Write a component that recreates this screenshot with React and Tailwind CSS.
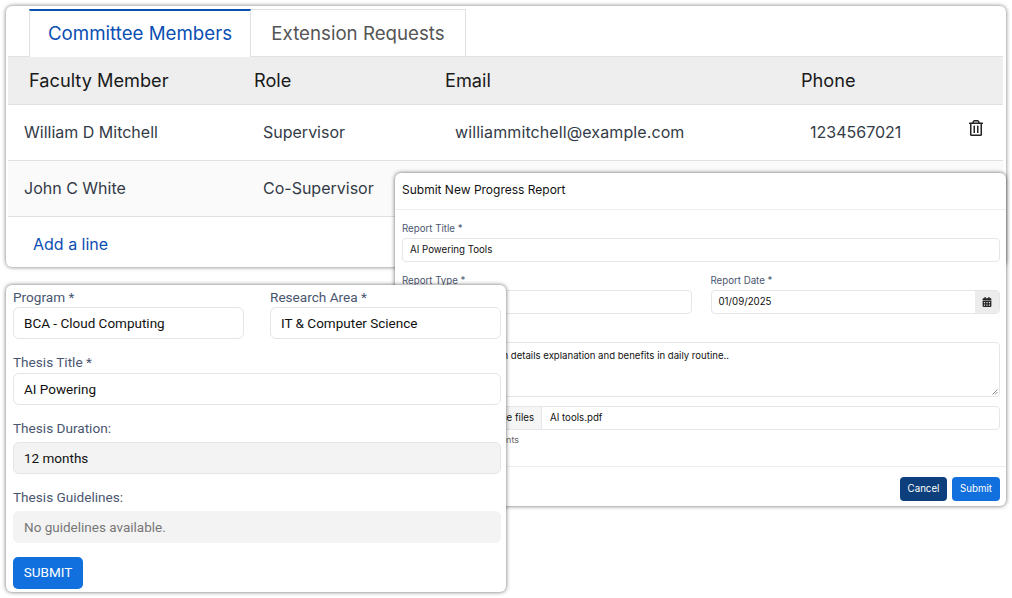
import { FaRegTrashAlt, FaCalendarAlt } from 'react-icons/fa';

const rows = [
  { name: 'William D Mitchell', role: 'Supervisor', email: 'williammitchell@example.com', phone: '1234567021', remove: true },
  { name: 'John C White', role: 'Co-Supervisor', email: 'johnwhite@example.com', phone: '1234567022', remove: false },
];

function CommitteeCard() {
  return (
    <div className="absolute left-[6px] top-[6px] w-[1000px] h-[261px] bg-white rounded-[6px] shadow-[0_0_4px_rgba(0,0,0,0.55)] overflow-hidden font-['Inter',sans-serif]">
      <div className="flex pl-[23px] pt-[3px] h-[51px] border-b border-[#dee2e6] ml-[2px] mr-[3px]">
        <div className="w-[222px] h-[48px] -ml-[2px] bg-white border-x border-[#dee2e6] border-t-2 border-t-[#0b4fb3] text-[#0b4fb3] text-[18.7px] flex items-center justify-center">Committee Members</div>
        <div className="w-[215px] h-[47px] pt-[2px] border-r border-t border-[#dee2e6] text-[#555] text-[18.7px] flex items-center justify-center">Extension Requests</div>
      </div>
      <div className="mx-[2px] mr-[3px] grid grid-cols-[239px_192px_355px_1fr] h-[48px] items-center bg-[#eeeeee] border-b border-[#dee2e6] text-[18.2px] text-[#1a1a1a]">
        <div className="pl-[21px]">Faculty Member</div>
        <div className="pl-[7px]">Role</div>
        <div className="pl-[6px]">Email</div>
        <div className="pl-[7px]">Phone</div>
      </div>
      {rows.map((r, i) => (
        <div key={r.name} className={`mx-[2px] mr-[3px] grid grid-cols-[239px_192px_355px_1fr] h-[56px] items-center border-b border-[#dee2e6] pb-[1px] text-[16px] text-[#333b47] ${i % 2 ? 'bg-[#fafafa]' : 'bg-white'}`}>
          <div className="pl-[16px]">{r.name}</div>
          <div className="pl-[16px]">{r.role}</div>
          <div className="pl-[16px] tracking-[0.1px]">{r.email}</div>
          <div className="pl-[16px] flex items-center justify-between pr-[19px]">
            <span>{r.phone}</span>
            {r.remove && <FaRegTrashAlt className="text-[16px] text-[#222] -mt-[9px]" />}
          </div>
        </div>
      ))}
      <div className="pl-[27px] pt-[15px] text-[16px] text-[#0b4fb3]">Add a line</div>
    </div>
  );
}

function ModalField({ label, children, className = '' }) {
  return (
    <div className={className}>
      <div className="text-[9.7px] leading-[14px] text-[#4a5670] mb-[2px]">{label}</div>
      {children}
    </div>
  );
}

const modalInput = 'h-[24px] bg-white border border-[#e3e6ea] rounded-[4px] flex items-center pl-[7px] text-[9.7px] text-[#111]';

function ProgressModal() {
  return (
    <div className="absolute left-[395px] top-[173px] w-[611px] h-[333px] bg-white rounded-[6px] shadow-[0_0_4px_rgba(0,0,0,0.6)] overflow-hidden font-['Inter',sans-serif]">
      <div className="h-[37px] border-b border-[#eeeeee] pl-[7px] pb-[2px] flex items-center text-[12px] text-[#111]">Submit New Progress Report</div>
      <div className="pl-[7px] pr-[6px] pt-[12px]">
        <ModalField label="Report Title *">
          <div className={`${modalInput} pt-[1px]`}>AI Powering Tools</div>
        </ModalField>
        <div className="grid grid-cols-2 gap-[19px] mt-[12px]">
          <ModalField label="Report Type *">
            <div className={modalInput}>Monthly Report</div>
          </ModalField>
          <ModalField label="Report Date *">
            <div className={`${modalInput} justify-between overflow-hidden pr-0`}>
              <span>01/09/2025</span>
              <span className="w-[24px] h-full bg-[#ececec] flex items-center justify-center text-[#222]">
                <FaCalendarAlt className="text-[10px]" />
              </span>
            </div>
          </ModalField>
        </div>
        <ModalField label="Description *" className="mt-[12px]">
          <div className="relative h-[55px] bg-white border border-[#e3e6ea] rounded-[4px] pl-[7px] pt-[6px] text-[9.6px] text-[#111]">
            AI Powering Tool with details explanation and benefits in daily routine..
            <svg className="absolute right-[1px] bottom-[1px] w-[6px] h-[6px] text-[#777]" viewBox="0 0 6 6" fill="none" stroke="currentColor" strokeWidth="0.8">
              <path d="M0.5 5.5 5.5 0.5M3 5.5 5.5 3" />
            </svg>
          </div>
        </ModalField>
        <div className="mt-[9px] h-[24px] border border-[#e3e6ea] rounded-[4px] flex items-center overflow-hidden text-[9.7px] text-[#111]">
          <span className="h-full w-[139px] pt-[1px] bg-[#f5f5f5] border-r border-[#e3e6ea] flex items-center justify-end pr-[7px]">Choose files</span>
          <span className="pl-[8px] pt-[1px]">AI tools.pdf</span>
        </div>
        <div className="mt-[3px] text-[9px] text-[#666]">Upload relevant documents</div>
      </div>
      <div className="absolute left-0 right-0 bottom-0 h-[40px] border-t border-[#eeeeee] flex items-center justify-end gap-[5px] pr-[6px] pt-[5px] text-[9.7px] text-white">
        <div className="w-[47px] h-[24px] rounded-[4px] bg-[#0c3f7c] flex items-center justify-center">Cancel</div>
        <div className="w-[48px] h-[24px] rounded-[4px] bg-[#1170de] flex items-center justify-center">Submit</div>
      </div>
    </div>
  );
}

function Label({ children }) {
  return <div className="text-[13.6px] leading-[20px] text-[#4a5670]">{children}</div>;
}

const thesisBox = 'h-[32px] rounded-[6px] border flex items-center pl-[10px] text-[13.5px]';

function ThesisCard() {
  return (
    <div className="absolute left-[6px] top-[285px] w-[500px] h-[307px] bg-white rounded-[6px] shadow-[0_0_4px_rgba(0,0,0,0.6)] pl-[7px] pr-[5px] pt-[2px] font-['Roboto',sans-serif]">
      <div className="grid grid-cols-2 gap-[26px]">
        <div>
          <Label>Program *</Label>
          <div className={`${thesisBox} border-[#e2e5e9] text-[#111]`}>BCA - Cloud Computing</div>
        </div>
        <div>
          <Label>Research Area *</Label>
          <div className={`${thesisBox} border-[#e2e5e9] text-[#111]`}>IT &amp; Computer Science</div>
        </div>
      </div>
      <div className="mt-[13px]">
        <Label>Thesis Title *</Label>
        <div className={`${thesisBox} border-[#e2e5e9] text-[#111] mt-[1px]`}>AI Powering</div>
      </div>
      <div className="mt-[13px]">
        <Label>Thesis Duration:</Label>
        <div className={`${thesisBox} border-[#e2e5e9] bg-[#f3f3f3] text-[#111] mt-[4px]`}>12 months</div>
      </div>
      <div className="mt-[13px]">
        <Label>Thesis Guidelines:</Label>
        <div className={`${thesisBox} border-[#f3f3f3] bg-[#f3f3f3] text-[#777] mt-[4px]`}>No guidelines available.</div>
      </div>
      <div className="mt-[14px] w-[70px] h-[32px] pb-[1px] rounded-[5px] bg-[#1170de] text-white text-[13.5px] flex items-center justify-center">SUBMIT</div>
    </div>
  );
}

export default function App() {
  return (
    <div className="relative w-[1012px] h-[598px] bg-white overflow-hidden">
      <CommitteeCard />
      <ProgressModal />
      <ThesisCard />
    </div>
  );
}
